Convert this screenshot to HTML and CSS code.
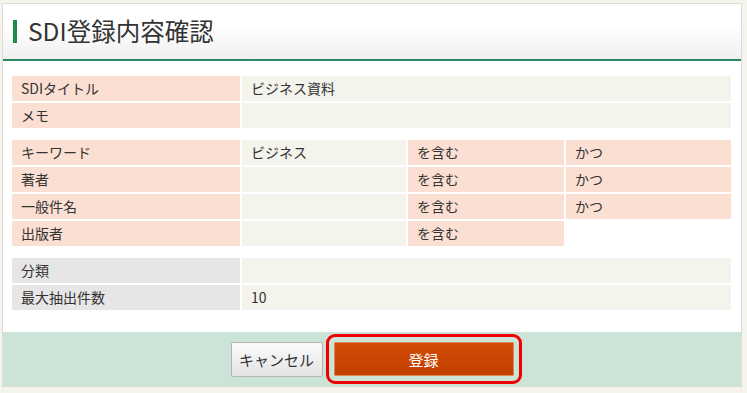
FILE: index.html
```html
<!DOCTYPE html>
<html lang="ja">
<head>
<meta charset="utf-8">
<title>SDI登録内容確認</title>
<link rel="stylesheet" href="styles.css">
</head>
<body>
<div class="panel">
  <div class="panel-header">
    <span class="title-bar"></span>
    <h1 class="title">SDI登録内容確認</h1>
  </div>
  <div class="panel-body">
    <div class="grid grid-2">
      <div class="cell label">SDIタイトル</div>
      <div class="cell value">ビジネス資料</div>
      <div class="cell label">メモ</div>
      <div class="cell value"></div>
    </div>
    <div class="grid grid-4">
      <div class="cell label">キーワード</div>
      <div class="cell value">ビジネス</div>
      <div class="cell label">を含む</div>
      <div class="cell label">かつ</div>
      <div class="cell label">著者</div>
      <div class="cell value"></div>
      <div class="cell label">を含む</div>
      <div class="cell label">かつ</div>
      <div class="cell label">一般件名</div>
      <div class="cell value"></div>
      <div class="cell label">を含む</div>
      <div class="cell label">かつ</div>
      <div class="cell label">出版者</div>
      <div class="cell value"></div>
      <div class="cell label">を含む</div>
      <div class="cell empty"></div>
    </div>
    <div class="grid grid-2">
      <div class="cell label gray">分類</div>
      <div class="cell value"></div>
      <div class="cell label gray">最大抽出件数</div>
      <div class="cell value">10</div>
    </div>
  </div>
  <div class="panel-footer">
    <button class="btn btn-cancel" type="button">キャンセル</button>
    <button class="btn btn-submit" type="button">登録</button>
  </div>
</div>
</body>
</html>
```
FILE: styles.css
```css
* { box-sizing: border-box; }

body {
  margin: 0;
  padding: 3px 5px 0 2px;
  background: #f4f3ec;
  font-family: "Noto Sans CJK JP", "Noto Sans", sans-serif;
  color: #333;
}

.panel {
  background: #fff;
  border: 1px solid #dddcd4;
}

.panel-header {
  height: 57px;
  display: flex;
  align-items: center;
  padding-left: 10px;
  background: linear-gradient(#ffffff 0%, #ffffff 40%, #efefef 100%);
  border-bottom: 2px solid #2e8a62;
}

.title-bar {
  width: 4px;
  height: 23px;
  background: #1e8a48;
  margin-right: 11px;
}

.title {
  margin: 0;
  font-size: 24.5px;
  font-weight: normal;
  line-height: 1;
  color: #333;
}

.panel-body {
  padding: 15px 10px 22px 9px;
  display: flex;
  flex-direction: column;
  gap: 12px;
}

.grid {
  display: grid;
  gap: 2px;
  grid-auto-rows: 25px;
}

.grid-2 { grid-template-columns: 228px 1fr; }
.grid-4 { grid-template-columns: 228px 164px 156px 1fr; }

.cell {
  font-size: 14px;
  line-height: 25px;
  padding-left: 9px;
  white-space: nowrap;
}

.label { background: #fbdfd2; }
.label.gray { background: #e6e6e6; }
.value { background: #f4f3ec; }
.empty { background: transparent; }

.panel-footer {
  height: 54px;
  background: #cbe4d7;
  display: flex;
  justify-content: center;
  align-items: center;
  gap: 11px;
}

.btn {
  font-family: "Noto Sans CJK JP", "Noto Sans", sans-serif;
  font-size: 15px;
  height: 35px;
  margin: 0;
  cursor: pointer;
}

.btn-cancel {
  width: 92px;
  padding: 0;
  color: #333;
  background: linear-gradient(#fbfbfb, #e4e4e4);
  border: 1px solid #b5b5b5;
  border-radius: 2px;
}

.btn-submit {
  width: 180px;
  height: 34px;
  color: #fff;
  background: linear-gradient(#d24c06, #c23f00);
  border: 1px solid #e48757;
  border-radius: 1px;
  outline: 3px solid #f00000;
  outline-offset: 5px;
}
```
